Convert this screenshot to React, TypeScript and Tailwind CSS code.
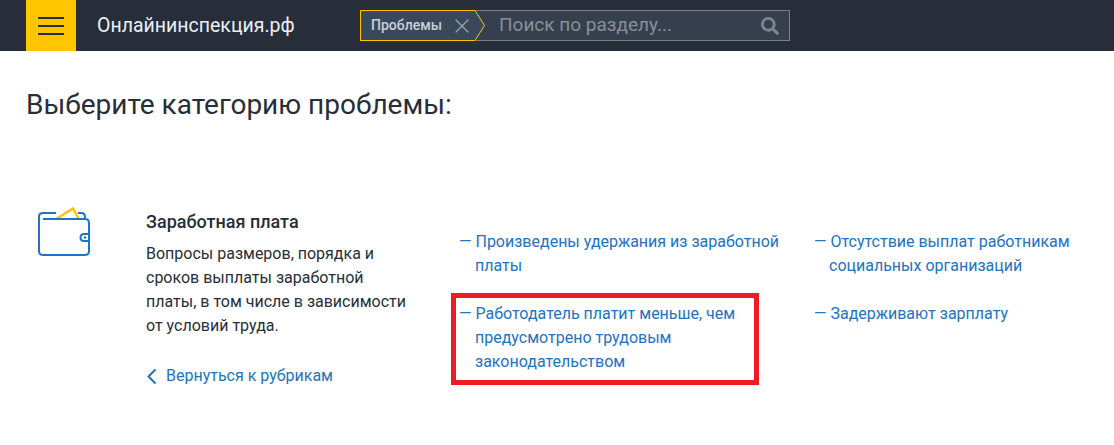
import { X } from 'lucide-react'
import { FaSearch } from 'react-icons/fa'

const WalletIcon = () => (
  <svg width="52" height="49" viewBox="0 0 52 49" fill="none">
    <path d="M18 12 L35 1.500 L41 12.500" stroke="#FFC600" strokeWidth="2.500" />
    <path d="M1 13 V9.500 Q1 6 5 6 H18 M40 6 H43 Q47 6 47 10 V12" stroke="#2173C2" strokeWidth="2" />
    <path
      d="M1 9 V44 Q1 48 5 48 H47 Q51 48 51 44 V16 Q51 12 47 12 H5"
      stroke="#2173C2"
      strokeWidth="2"
    />
    <path d="M51 27 H46 Q42.500 27 42.500 30.500 Q42.500 34 46 34 H51" stroke="#2173C2" strokeWidth="2" />
    <circle cx="47" cy="30.500" r="1.200" fill="#2173C2" />
  </svg>
)

const ProblemLink = ({ text }: { text: string }) => (
  <a href="#" className="block pr-[20px] pl-[16px] -indent-[16px] text-[16px] leading-6 text-[#2173C2]">
    — {text}
  </a>
)

const ProblemLinkRight = ({ text }: { text: string }) => (
  <a href="#" className="block pr-[10px] pl-[15px] -indent-[15px] text-[16px] leading-6 text-[#2173C2]">
    — {text}
  </a>
)

export default function App() {
  return (
    <div className="relative h-[445px] w-[1114px] overflow-hidden bg-white font-['Roboto',sans-serif]">
      <header className="flex h-[51px] items-stretch bg-[#272E3A]">
        <button className="ml-[26px] flex w-[50px] flex-col items-center justify-center gap-[6px] bg-[#FFC600]">
          <span className="h-[2px] w-[26px] bg-[#272E3A]" />
          <span className="h-[2px] w-[26px] bg-[#272E3A]" />
          <span className="h-[2px] w-[26px] bg-[#272E3A]" />
        </button>
        <div className="ml-[21px] w-[197px] self-center whitespace-nowrap text-[19.5px] text-[#E8F1FA]">Онлайнинспекция.рф</div>
        <div className="ml-[66px] mt-[10px] flex h-[31px] w-[430px] items-center border border-[#7B818A] bg-[#363F4D]">
          <div className="relative -my-px -ml-px flex h-[31px] w-[115px] items-center border-y border-l border-[#FFC600] bg-[#39485A] pl-[10px]">
            <span className="text-[14px] font-medium text-[#C9D0D8]">Проблемы</span>
            <X className="ml-[8px] text-[#9AA3AE]" size={24} strokeWidth={1.2} />
            <svg className="absolute -right-[10px] -top-px" width="10" height="31" viewBox="0 0 10 31">
              <path d="M0 0 V31 L9.500 15.500 Z" fill="#39485A" />
              <path d="M0 0.500 L9.500 15.500 L0 30.500" stroke="#FFC600" fill="none" />
            </svg>
          </div>
          <span className="ml-[24px] flex-1 text-[19px] text-[#8A8F96]">Поиск по разделу...</span>
          <FaSearch className="mr-[10px] text-[#7E858D]" size={18} />
        </div>
      </header>

      <main className="pl-[26px]">
        <h1 className="mt-[35px] text-[28px] leading-[38px] text-[#272E3A]">
          Выберите категорию проблемы:
        </h1>

        <section className="mt-[86px] flex">
          <div className="-mt-[3px] w-[120px] shrink-0 pl-[12px]">
            <WalletIcon />
          </div>
          <div className="w-[313px] shrink-0">
            <h2 className="text-[18px] font-medium leading-6 text-[#272E3A]">Заработная плата</h2>
            <p className="mt-[8px] w-[270px] text-[16px] leading-6 text-[#272E3A]">
              Вопросы размеров, порядка и сроков выплаты заработной платы, в том числе в зависимости от условий труда.
            </p>
            <a href="#" className="mt-[26px] flex items-center gap-[9px] text-[16px] leading-6 text-[#2173C2]">
              <svg width="11" height="17" viewBox="0 0 11 17" fill="none">
                <path d="M9.500 1.500 L2.500 8.500 L9.500 15.500" stroke="#2173C2" strokeWidth="2" />
              </svg>
              <span>Вернуться к рубрикам</span>
            </a>
          </div>
          <div className="mt-[20px] grid w-[640px] grid-cols-[355px_285px] content-start gap-y-[24px]">
            <ProblemLink text="Произведены удержания из заработной платы" />
            <ProblemLinkRight text="Отсутствие выплат работникам социальных организаций" />
            <ProblemLink text="Работодатель платит меньше, чем предусмотрено трудовым законодательством" />
            <ProblemLinkRight text="Задерживают зарплату" />
          </div>
        </section>
      </main>

      <div className="absolute left-[451px] top-[293px] h-[92px] w-[308px] border-[5px] border-[#ED1C24]" />
    </div>
  )
}
